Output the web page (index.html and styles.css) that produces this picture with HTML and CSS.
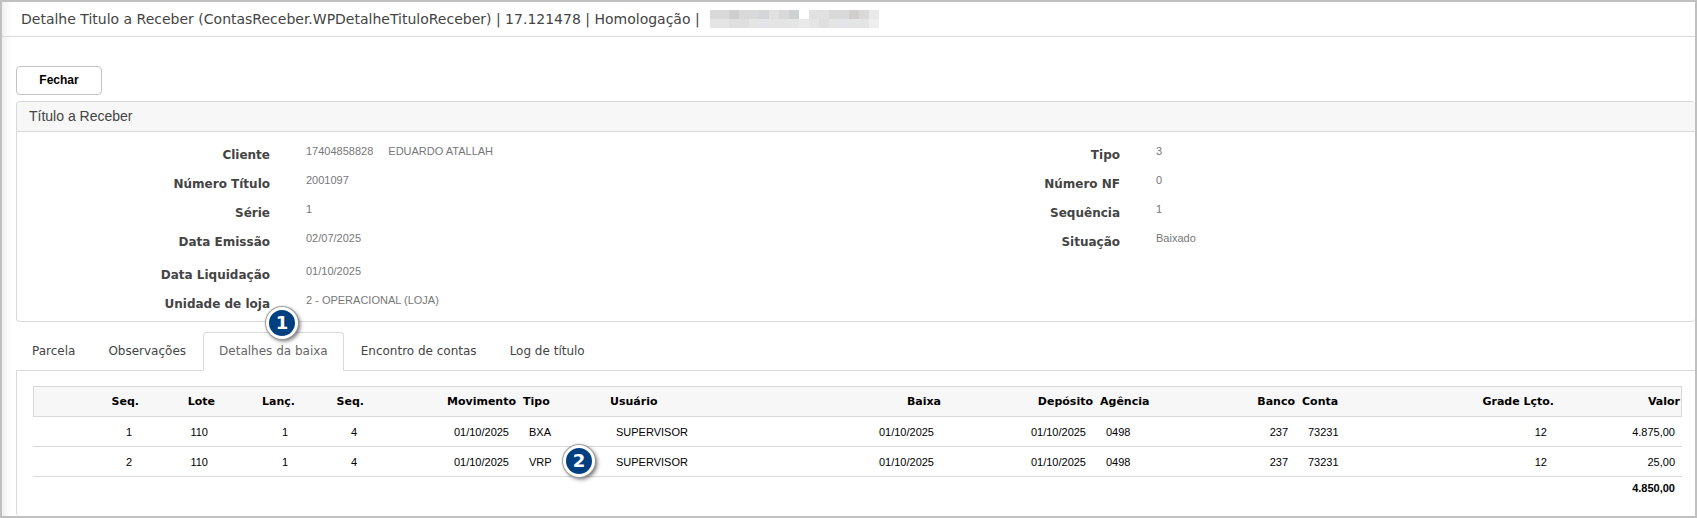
FILE: index.html
```html
<!DOCTYPE html>
<html lang="pt-BR">
<head>
  <meta charset="UTF-8">
  <meta name="viewport" content="width=device-width, initial-scale=1.0">
  <title>Detalhe Titulo a Receber</title>
  <link rel="stylesheet" href="styles.css">
</head>
<body>
  <header class="page-header">
    <h1>Detalhe Titulo a Receber (ContasReceber.WPDetalheTituloReceber) | 17.121478 | Homologação |</h1>
    <svg class="masked" width="169" height="18" viewBox="0 0 169 18" shape-rendering="crispEdges" aria-hidden="true">
      <path fill="#d9d9d9" d="M0 0h89v9H0zM119 0h40v9h-40z"/>
      <path fill="#cfcfcf" d="M19 0h10v9H19z"/>
      <path fill="#d2d6d9" d="M49 0h10v9H49z"/>
      <path fill="#cdd1d1" d="M79 0h10v9H79z"/>
      <path fill="#e1e1e1" d="M59 0h10v9H59zM99 0h20v9H99z"/>
      <path fill="#d0cfcb" d="M139 0h10v9h-10z"/>
      <path fill="#e9e9e9" d="M159 0h10v9h-10z"/>
      <path fill="#e5e5e5" d="M0 9h159v9H0z"/>
      <path fill="#dfdfdf" d="M19 9h20v9H19zM109 9h10v9h-10z"/>
      <path fill="#e4e5e9" d="M49 9h10v9H49zM129 9h10v9h-10z"/>
      <path fill="#e9e9e9" d="M89 9h10v9H89z"/>
      <path fill="#eeeeee" d="M159 9h10v9h-10z"/>
    </svg>
  </header>

  <main class="content">
    <button type="button" class="btn">Fechar</button>

    <section class="panel">
      <h2 class="panel-title">Título a Receber</h2>
      <div class="panel-body">
        <dl class="fields">
          <dt>Cliente</dt>
          <dd><span>17404858828</span><span>EDUARDO ATALLAH</span></dd>
          <dt>Número Título</dt>
          <dd>2001097</dd>
          <dt>Série</dt>
          <dd>1</dd>
          <dt>Data Emissão</dt>
          <dd>02/07/2025</dd>
          <dt class="spaced">Data Liquidação</dt>
          <dd class="spaced">01/10/2025</dd>
          <dt>Unidade de loja</dt>
          <dd>2 - OPERACIONAL (LOJA)</dd>
        </dl>
        <dl class="fields">
          <dt>Tipo</dt>
          <dd>3</dd>
          <dt>Número NF</dt>
          <dd>0</dd>
          <dt>Sequência</dt>
          <dd>1</dd>
          <dt>Situação</dt>
          <dd>Baixado</dd>
        </dl>
      </div>
    </section>

    <nav class="tabs">
      <a href="#parcela">Parcela</a>
      <a href="#observacoes">Observações</a>
      <a href="#baixa" class="active">Detalhes da baixa<span class="badge badge-tab">1</span></a>
      <a href="#encontro">Encontro de contas</a>
      <a href="#log">Log de título</a>
    </nav>

    <section class="tab-panel" id="baixa">
      <table class="grid">
        <colgroup>
          <col class="w-icon"><col class="w-seq"><col class="w-lote"><col class="w-lanc"><col class="w-seq">
          <col class="w-date"><col class="w-tipo"><col><col class="w-date"><col class="w-date">
          <col class="w-agencia"><col class="w-banco"><col class="w-conta"><col class="w-grade"><col class="w-valor">
        </colgroup>
        <thead>
          <tr>
            <th></th>
            <th>Seq.</th>
            <th>Lote</th>
            <th>Lanç.</th>
            <th>Seq.</th>
            <th>Movimento</th>
            <th class="left">Tipo</th>
            <th class="left">Usuário</th>
            <th>Baixa</th>
            <th>Depósito</th>
            <th class="left">Agência</th>
            <th>Banco</th>
            <th class="left">Conta</th>
            <th>Grade Lçto.</th>
            <th>Valor</th>
          </tr>
        </thead>
        <tbody>
          <tr>
            <td></td>
            <td>1</td>
            <td>110</td>
            <td>1</td>
            <td>4</td>
            <td>01/10/2025</td>
            <td class="left">BXA</td>
            <td class="left">SUPERVISOR</td>
            <td>01/10/2025</td>
            <td>01/10/2025</td>
            <td class="left">0498</td>
            <td>237</td>
            <td class="left">73231</td>
            <td>12</td>
            <td>4.875,00</td>
          </tr>
          <tr>
            <td></td>
            <td>2</td>
            <td>110</td>
            <td>1</td>
            <td>4</td>
            <td>01/10/2025</td>
            <td class="left marked">VRP<span class="badge badge-row">2</span></td>
            <td class="left">SUPERVISOR</td>
            <td>01/10/2025</td>
            <td>01/10/2025</td>
            <td class="left">0498</td>
            <td>237</td>
            <td class="left">73231</td>
            <td>12</td>
            <td>25,00</td>
          </tr>
        </tbody>
        <tfoot>
          <tr>
            <td colspan="15">4.850,00</td>
          </tr>
        </tfoot>
      </table>
    </section>
  </main>
</body>
</html>
```
FILE: styles.css
```css
* {
  box-sizing: border-box;
}

body {
  margin: 0;
  min-height: 100vh;
  border: 2px solid #c0c0c0;
  background: linear-gradient(to right, #eeeeee, #ffffff 12px);
  font-family: "Liberation Sans", Arial, sans-serif;
  font-size: 11px;
  color: #000;
  display: flex;
  flex-direction: column;
}

.page-header {
  display: flex;
  align-items: center;
  gap: 10px;
  height: 35px;
  padding-left: 19px;
  border-bottom: 1px solid #d9d9d9;
}

.page-header h1 {
  margin: 0;
  font: 14px "DejaVu Sans", Verdana, sans-serif;
  color: #444;
}

.content {
  flex: 1;
  display: flex;
  flex-direction: column;
  padding: 29px 0 0 14px;
}

.btn {
  align-self: flex-start;
  width: 86px;
  height: 29px;
  padding: 0 0 2px;
  border: 1px solid #c4c4c4;
  border-radius: 4px;
  background: #fff;
  font: bold 12px "Liberation Sans", Arial, sans-serif;
  color: #000;
  cursor: pointer;
}

.panel {
  margin-top: 6px;
  border: 1px solid #d9d9d9;
  border-right: none;
  border-radius: 4px;
  background: #fff;
}

.panel-title {
  margin: 0;
  height: 30px;
  padding-left: 12px;
  border-bottom: 1px solid #d9d9d9;
  border-radius: 4px 4px 0 0;
  background: #f7f7f7;
  font-size: 14px;
  font-weight: normal;
  line-height: 28px;
  color: #444;
}

.panel-body {
  display: grid;
  grid-template-columns: 1fr 1fr;
  column-gap: 22px;
  padding: 9px 0 2px;
}

.fields {
  display: grid;
  grid-template-columns: 253px 1fr;
  grid-auto-rows: min-content;
  column-gap: 36px;
  margin: 0;
}

.fields dt {
  height: 29px;
  font: bold 12px/29px "DejaVu Sans", Verdana, sans-serif;
  color: #444;
  text-align: right;
}

.fields dd {
  display: flex;
  gap: 15px;
  margin: 0;
  line-height: 20px;
  color: #777;
}

.fields .spaced {
  margin-top: 4px;
}

.tabs {
  display: flex;
  gap: 1px;
  margin-top: 10px;
  border-bottom: 1px solid #d9d9d9;
}

.tabs a {
  position: relative;
  height: 39px;
  margin-bottom: -1px;
  padding: 0 15px;
  border: 1px solid transparent;
  border-radius: 4px 4px 0 0;
  font: 12px/37px "DejaVu Sans", Verdana, sans-serif;
  color: #444;
  text-decoration: none;
}

.tabs .active {
  border-color: #d9d9d9;
  border-bottom-color: #fff;
  background: #fff;
  color: #666;
}

.tab-panel {
  flex: 1;
  padding: 15px 13px 15px 16px;
  border-left: 1px solid #d9d9d9;
  border-bottom-left-radius: 4px;
  background: #fff;
}

.grid {
  width: 100%;
  table-layout: fixed;
  border-collapse: separate;
  border-spacing: 0;
}

.grid th {
  height: 31px;
  padding: 0 1px 0 0;
  border-top: 1px solid #d9d9d9;
  border-bottom: 1px solid #d9d9d9;
  background: #f7f7f7;
  font: bold 11px "DejaVu Sans", Verdana, sans-serif;
  text-align: right;
}

.grid th:first-child {
  border-left: 1px solid #d9d9d9;
}

.grid th:last-child {
  border-right: 1px solid #d9d9d9;
}

.grid td {
  height: 30px;
  padding: 0 8px 0 0;
  border-bottom: 1px solid #d9d9d9;
  text-align: right;
}

.grid td:last-child {
  padding-right: 7px;
}

.grid th.left {
  padding-left: 6px;
  text-align: left;
}

.grid td.left {
  padding-left: 12px;
  text-align: left;
}

.grid tfoot td {
  height: 22px;
  border-bottom: none;
  font-weight: bold;
}

.w-icon { width: 38px; }
.w-seq { width: 69px; }
.w-lote { width: 76px; }
.w-lanc { width: 80px; }
.w-date { width: 152px; }
.w-tipo { width: 87px; }
.w-agencia { width: 112px; }
.w-banco { width: 90px; }
.w-conta { width: 103px; }
.w-grade { width: 156px; }
.w-valor { width: 127px; }

.marked {
  position: relative;
}

/* numbered step markers */
.badge {
  position: absolute;
  width: 32px;
  height: 32px;
  border: 3px solid #fff;
  border-radius: 50%;
  background: #004080;
  box-shadow: 0 0 1px 1px #999, 2px 2px 4px rgba(0, 0, 0, 0.6);
  font: bold 18px/26px "DejaVu Sans", Verdana, sans-serif;
  color: #fff;
  text-align: center;
}

.badge-tab {
  top: -26px;
  left: 62px;
}

.badge-row {
  top: -2px;
  left: 46px;
}
```
